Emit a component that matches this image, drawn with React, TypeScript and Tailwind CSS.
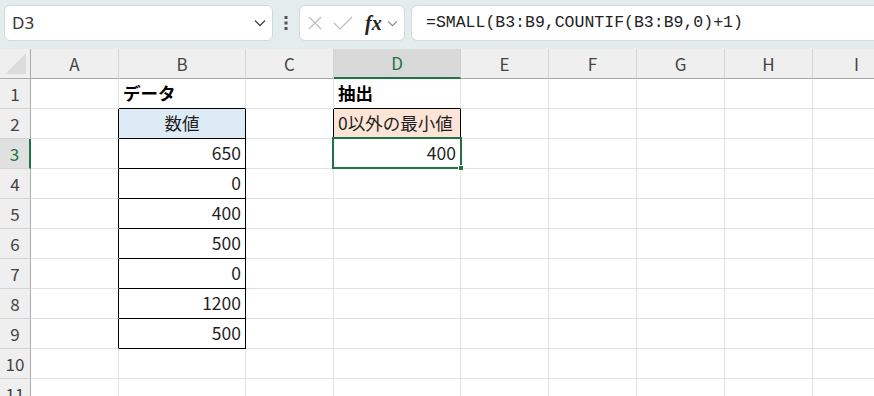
import React from 'react';

const cols = ['A', 'B', 'C', 'D', 'E', 'F', 'G', 'H', 'I'];
const rowCount = 11;

type Cell = { text: string; align?: 'left' | 'right' | 'center'; bold?: boolean; fill?: string };

const data: Record<string, Cell> = {
  B1: { text: 'データ', bold: true },
  D1: { text: '抽出', bold: true },
  B2: { text: '数値', align: 'center', fill: 'bg-[#ddebf7]' },
  D2: { text: '0以外の最小値', fill: 'bg-[#fce4d6]' },
  B3: { text: '650', align: 'right' },
  D3: { text: '400', align: 'right' },
  B4: { text: '0', align: 'right' },
  B5: { text: '400', align: 'right' },
  B6: { text: '500', align: 'right' },
  B7: { text: '0', align: 'right' },
  B8: { text: '1200', align: 'right' },
  B9: { text: '500', align: 'right' },
};

const font = { fontFamily: '"Noto Sans CJK JP", "Noto Sans", sans-serif' };

function Chevron({ className }: { className?: string }) {
  return (
    <svg viewBox="0 0 12 8" className={className} fill="none" stroke="currentColor" strokeWidth="1.3">
      <path d="M1 1.5 L6 6.5 L11 1.5" />
    </svg>
  );
}

function Toolbar() {
  return (
    <div className="flex h-[49px] items-start gap-0 bg-[#e3eded] pt-[5px] pl-[4px]">
      <div className="flex h-[36px] w-[269px] items-center justify-between rounded-md border border-[#d4d8d8] bg-white pl-[7px] pr-[6px]">
        <span className="text-[17px] text-[#333]" style={{ fontFamily: '"Noto Sans", sans-serif' }}>D3</span>
        <Chevron className="h-[8px] w-[12px] text-[#444]" />
      </div>
      <div className="flex h-[36px] w-[26px] items-center justify-center">
        <svg viewBox="0 0 4 14" className="h-[14px] w-[4px] text-[#555]" fill="currentColor">
          <rect x="0.5" y="0" width="3" height="3" />
          <rect x="0.5" y="5.5" width="3" height="3" />
          <rect x="0.5" y="11" width="3" height="3" />
        </svg>
      </div>
      <div className="flex h-[36px] w-[106px] items-center rounded-md border border-[#d4d8d8] bg-white pl-[7px]">
        <svg viewBox="0 0 16 16" className="h-[16px] w-[16px] text-[#bcbcbc]" fill="none" stroke="currentColor" strokeWidth="1.2">
          <path d="M2 2 L14 14 M14 2 L2 14" />
        </svg>
        <svg viewBox="0 0 20 16" className="ml-[10px] h-[16px] w-[20px] text-[#bcbcbc]" fill="none" stroke="currentColor" strokeWidth="1.2">
          <path d="M1 8 L7 14 L19 2" />
        </svg>
        <span className="ml-[12px] text-[20px] font-bold italic leading-none text-[#222]" style={{ fontFamily: '"Liberation Serif", serif' }}>
          fx
        </span>
        <Chevron className="ml-[5px] h-[7px] w-[11px] text-[#888]" />
      </div>
      <div className="ml-[6px] flex h-[36px] flex-1 items-center rounded-l-md border border-r-0 border-[#d4d8d8] bg-white pl-[14px]">
        <span className="text-[16.5px] text-[#222]" style={{ fontFamily: '"Liberation Mono", monospace' }}>
          =SMALL(B3:B9,COUNTIF(B3:B9,0)+1)
        </span>
      </div>
    </div>
  );
}

function cellBorder(r: number, c: number) {
  const inB = c === 1 && r >= 2 && r <= 9;
  const rightBlack = (c === 0 && r >= 2 && r <= 9) || inB || ((c === 2 || c === 3) && r === 2);
  const bottomBlack = (c === 1 && r >= 1 && r <= 9) || (c === 3 && (r === 1 || r === 2));
  return [
    'border-r border-b',
    rightBlack ? 'border-r-black' : 'border-r-[#e1e1e1]',
    bottomBlack ? 'border-b-black' : 'border-b-[#e1e1e1]',
  ].join(' ');
}

export default function App() {
  return (
    <div className="h-[396px] w-[874px] overflow-hidden bg-white" style={font}>
      <Toolbar />
      <div className="relative grid grid-cols-[31px_88px_127px_88px_127px_88px_88px_88px_88px_88px] auto-rows-[30px]">
        {/* corner */}
        <div className="relative border-r border-b border-r-[#ababab] border-b-[#ababab] bg-[#efefef]">
          <svg viewBox="0 0 22 22" className="absolute left-[5px] top-[4px] h-[21px] w-[21px]">
            <polygon points="22,0 22,22 0,22" fill="#dcdcdc" />
          </svg>
        </div>
        {cols.map((c) => (
          <div
            key={c}
            className={
              c === 'D'
                ? 'flex items-center justify-center border-r border-b-2 border-r-[#cfcfcf] border-b-[#217346] bg-[#d9d9d9] text-[17px] text-[#217346]'
                : 'flex items-center justify-center border-r border-b border-r-[#d4d4d4] border-b-[#ababab] bg-[#efefef] text-[17px] text-[#444]'
            }
          >
            {c}
          </div>
        ))}
        {Array.from({ length: rowCount }, (_, i) => i + 1).map((r) => (
          <React.Fragment key={r}>
            <div
              className={
                r === 3
                  ? 'flex items-center justify-center border-r-2 border-b border-r-[#217346] border-b-[#d4d4d4] bg-[#e0e0e0] text-[17px] text-[#217346]'
                  : 'flex items-center justify-center border-r border-b border-r-[#ababab] border-b-[#d4d4d4] bg-[#efefef] text-[17px] text-[#444]'
              }
            >
              {r}
            </div>
            {cols.map((c, ci) => {
              const cell = data[`${c}${r}`];
              const align =
                cell?.align === 'right' ? 'justify-end pr-[4px]' : cell?.align === 'center' ? 'justify-center' : 'justify-start pl-[4px]';
              return (
                <div
                  key={c}
                  className={`flex items-center whitespace-nowrap text-[17.5px] text-[#1f1f1f] ${align} ${cellBorder(r, ci)} ${cell?.fill ?? ''} ${cell?.bold ? 'font-bold text-black' : ''}`}
                >
                  {cell?.text}
                </div>
              );
            })}
          </React.Fragment>
        ))}
        {/* selection D3 */}
        <div className="pointer-events-none absolute left-[332px] top-[88px] h-[32px] w-[130px] border-2 border-[#217346]">
          <div className="absolute -bottom-[4px] -right-[4px] h-[6px] w-[6px] border border-white bg-[#217346]" />
        </div>
      </div>
    </div>
  );
}
